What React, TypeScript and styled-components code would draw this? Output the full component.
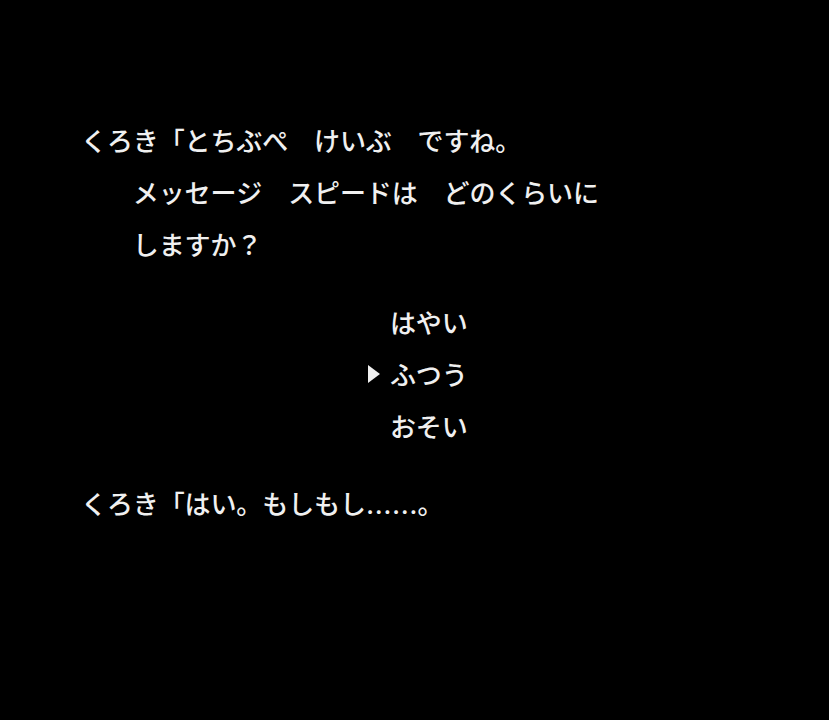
import styled, {createGlobalStyle} from "styled-components";

const CELL = 25.9

const GlobalStyle = createGlobalStyle`
    html, body {
        margin: 0;
        padding: 0;
        background: #000;
    }
    #root {
        min-height: 720px;
    }
`

type LineProps = {
    text: string
    indent?: number
}

// the ellipsis dots sit on the baseline in the game font
const isLow = (ch: string) => ch === "…"

const Line = (props: LineProps) => {
    return (
        <StyledLine $indent={props.indent ?? 0}>
            {Array.from(props.text).map((ch, i) => (
                <Cell key={i} $low={isLow(ch)}>{ch === " " ? "\u00a0" : ch}</Cell>
            ))}
        </StyledLine>
    )
}

type MenuItemProps = {
    label: string
    selected?: boolean
}

const MenuItem = (props: MenuItemProps) => {
    return (
        <StyledMenuItem>
            <MarkerCell>{props.selected && <Marker/>}</MarkerCell>
            {Array.from(props.label).map((ch, i) => (
                <Cell key={i}>{ch}</Cell>
            ))}
        </StyledMenuItem>
    )
}

export default function App() {
    return (
        <Screen lang="ja">
            <GlobalStyle/>
            <Dialog>
                <Line text="くろき「とちぶぺ けいぶ ですね。"/>
                <Line indent={2} text="メッセージ スピードは どのくらいに"/>
                <Line indent={2} text="しますか？"/>
            </Dialog>
            <Menu>
                <MenuItem label="はやい"/>
                <MenuItem label="ふつう" selected/>
                <MenuItem label="おそい"/>
            </Menu>
            <Dialog>
                <Line text="くろき「はい。もしもし……。"/>
            </Dialog>
        </Screen>
    )
}

const Screen = styled.div`
    width: 829px;
    height: 720px;
    background: #000;
    color: #f0f0f0;
    font-family: "Noto Sans CJK JP", "Noto Sans", sans-serif;
    font-weight: 500;
    font-size: 26px;
    padding: 114px 0 0 81px;
    box-sizing: border-box;
    overflow: hidden;
`

const Dialog = styled.div`
    display: flex;
    flex-direction: column;
`

const StyledLine = styled.div<{ $indent: number }>`
    display: flex;
    height: 52px;
    align-items: center;
    padding-left: ${p => p.$indent * CELL}px;
    white-space: pre;
`

const Cell = styled.span<{ $low?: boolean }>`
    display: inline-block;
    width: ${CELL}px;
    text-align: left;
    line-height: 52px;
    padding-top: ${p => (p.$low ? 16 : 0)}px;
`

const Menu = styled.div`
    display: flex;
    flex-direction: column;
    margin: 26px 0 25px 283px;
`

const StyledMenuItem = styled.div`
    display: flex;
    height: 52px;
    align-items: center;
`

const MarkerCell = styled.span`
    display: flex;
    align-items: center;
    width: ${CELL}px;
    height: 52px;
    padding-left: 4px;
    box-sizing: border-box;
`

const Marker = styled.span`
    width: 0;
    height: 0;
    border-left: 12px solid #f0f0f0;
    border-top: 9px solid transparent;
    border-bottom: 9px solid transparent;
`
